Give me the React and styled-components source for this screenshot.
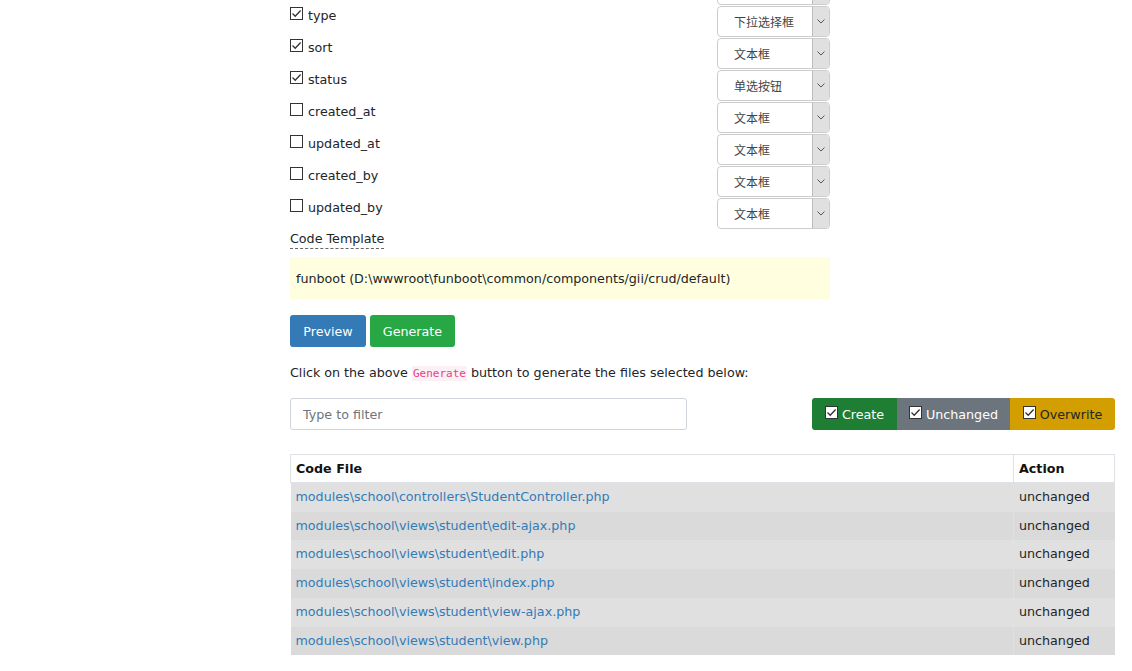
import styled, { createGlobalStyle } from "styled-components";

const Global = createGlobalStyle`
  html, body { margin: 0; padding: 0; background: #fff; }
  body {
    font-family: "DejaVu Sans", Verdana, "Noto Sans CJK SC", sans-serif;
    font-size: 12.7px;
    color: #212529;
    overflow: hidden;
  }
`;

const Page = styled.div`
  margin: -27px 0 0 290px;
  width: 825px;
`;

const Form = styled.div`
  width: 540px;
`;

const FieldRow = styled.div`
  display: flex;
  align-items: center;
  justify-content: space-between;
  height: 32px;
`;

const Check = styled.label`
  display: flex;
  align-items: center;
  gap: 5px;
  color: #212529;
  margin-top: -12px;
`;

const Box = styled.span`
  width: 11px;
  height: 11px;
  border: 1px solid #333;
  background: #fff;
  display: inline-flex;
  align-items: center;
  justify-content: center;
  flex: none;
  margin-top: -3px;
  box-sizing: content-box;
`;

const Tick = ({ color = "#333" }) => (
  <svg width="11" height="11" viewBox="0 0 11 11">
    <path d="M1.5 5.5 L4.2 8.2 L9.6 2.5" fill="none" stroke={color} strokeWidth="1.3" />
  </svg>
);

const CheckBox = ({ checked, color }) => <Box>{checked && <Tick color={color} />}</Box>;

const Select = styled.div`
  width: 113px;
  height: 31px;
  border: 1px solid #ccc;
  border-radius: 4px;
  display: flex;
  box-sizing: border-box;
  overflow: hidden;
  background: #fff;
`;

const SelectText = styled.span`
  flex: 1;
  padding-left: 16px;
  line-height: 29px;
  font-size: 12px;
  font-family: "Noto Sans CJK SC", sans-serif;
  color: #444;
`;

const Arrow = styled.span`
  width: 16px;
  background: #e0e0e0;
  border-left: 1px solid #bbb;
  display: flex;
  align-items: center;
  justify-content: center;
`;

const Label = styled.div`
  display: inline-block;
  margin-top: 1px;
  padding-bottom: 1px;
  border-bottom: 1px dashed #666;
  line-height: 17px;
`;

const Sticky = styled.div`
  margin-top: 8px;
  background: #ffffe0;
  height: 42px;
  padding: 0 6px;
  display: flex;
  align-items: center;
`;

const Buttons = styled.div`
  display: flex;
  gap: 4px;
  margin-top: 16px;
`;

const Btn = styled.button`
  height: 32px;
  width: ${(p) => p.$w}px;
  padding: 0;
  border: none;
  border-radius: 3px;
  color: #fff;
  font-family: inherit;
  font-size: 12.7px;
  background: ${(p) => p.$bg};
`;

const Note = styled.p`
  margin: 18px 0 0;
  line-height: 16px;
`;

const Code = styled.code`
  font-family: "DejaVu Sans Mono", monospace;
  font-size: 11px;
  color: #e83e8c;
  background: #fbf0f3;
  padding: 1px 1px;
`;

const FilterRow = styled.div`
  display: flex;
  justify-content: space-between;
  margin-top: 16px;
`;

const Filter = styled.input`
  width: 397px;
  height: 32px;
  box-sizing: border-box;
  border: 1px solid #ced4da;
  border-radius: 3px;
  padding: 0 12px;
  font-family: inherit;
  font-size: 12.7px;
  &::placeholder { color: #6c757d; }
`;

const Group = styled.div`
  display: flex;
  height: 32px;
  border-radius: 3px;
  overflow: hidden;
`;

const Toggle = styled.span`
  display: flex;
  align-items: center;
  justify-content: center;
  gap: 4px;
  width: ${(p) => p.$w}px;
  background: ${(p) => p.$bg};
  color: ${(p) => p.$fg};
`;

const Table = styled.table`
  margin-top: 24px;
  width: 825px;
  border-collapse: collapse;
  th, td {
    padding: 4px 5px;
    text-align: left;
  }
  td { line-height: 20.7px; }
  th {
    line-height: 19px;
    background: #fff;
    border: 1px solid #dee2e6;
    font-weight: bold;
    color: #111;
  }
  td + td, th + th { border-left: 1px solid #dee2e6; }
`;

const Tr = styled.tr`
  background: ${(p) => (p.$odd ? "#dadada" : "#e0e0e0")};
`;

const FileLink = styled.a`
  color: #337ab7;
  text-decoration: none;
`;

const fields = [
  ["name", true, "文本框"],
  ["type", true, "下拉选择框"],
  ["sort", true, "文本框"],
  ["status", true, "单选按钮"],
  ["created_at", false, "文本框"],
  ["updated_at", false, "文本框"],
  ["created_by", false, "文本框"],
  ["updated_by", false, "文本框"],
];

const files = [
  "modules\\school\\controllers\\StudentController.php",
  "modules\\school\\views\\student\\edit-ajax.php",
  "modules\\school\\views\\student\\edit.php",
  "modules\\school\\views\\student\\index.php",
  "modules\\school\\views\\student\\view-ajax.php",
  "modules\\school\\views\\student\\view.php",
];

export default function App() {
  return (
    <Page>
      <Global />
      <Form>
        {fields.map(([name, on, kind]) => (
          <FieldRow key={name}>
            <Check>
              <CheckBox checked={on} />
              {name}
            </Check>
            <Select>
              <SelectText>{kind}</SelectText>
              <Arrow>
                <svg width="8" height="5" viewBox="0 0 8 5">
                  <path d="M0.5 0.5 L4 4 L7.5 0.5" fill="none" stroke="#555" />
                </svg>
              </Arrow>
            </Select>
          </FieldRow>
        ))}
        <Label>Code Template</Label>
        <Sticky>funboot (D:\wwwroot\funboot\common/components/gii/crud/default)</Sticky>
        <Buttons>
          <Btn $bg="#337ab7" $w={76}>Preview</Btn>
          <Btn $bg="#28a745" $w={85}>Generate</Btn>
        </Buttons>
      </Form>
      <Note>
        Click on the above <Code>Generate</Code> button to generate the files selected below:
      </Note>
      <FilterRow>
        <Filter placeholder="Type to filter" />
        <Group>
          <Toggle $bg="#1e7e34" $fg="#fff" $w={85}>
            <CheckBox checked />
            Create
          </Toggle>
          <Toggle $bg="#6c757d" $fg="#fff" $w={113}>
            <CheckBox checked />
            Unchanged
          </Toggle>
          <Toggle $bg="#d39e00" $fg="#212529" $w={105}>
            <CheckBox checked />
            Overwrite
          </Toggle>
        </Group>
      </FilterRow>
      <Table>
        <thead>
          <tr>
            <th>Code File</th>
            <th style={{ width: 90 }}>Action</th>
          </tr>
        </thead>
        <tbody>
          {files.map((f, i) => (
            <Tr key={f} $odd={i % 2 === 1}>
              <td>
                <FileLink href="#">{f}</FileLink>
              </td>
              <td>unchanged</td>
            </Tr>
          ))}
        </tbody>
      </Table>
    </Page>
  );
}
